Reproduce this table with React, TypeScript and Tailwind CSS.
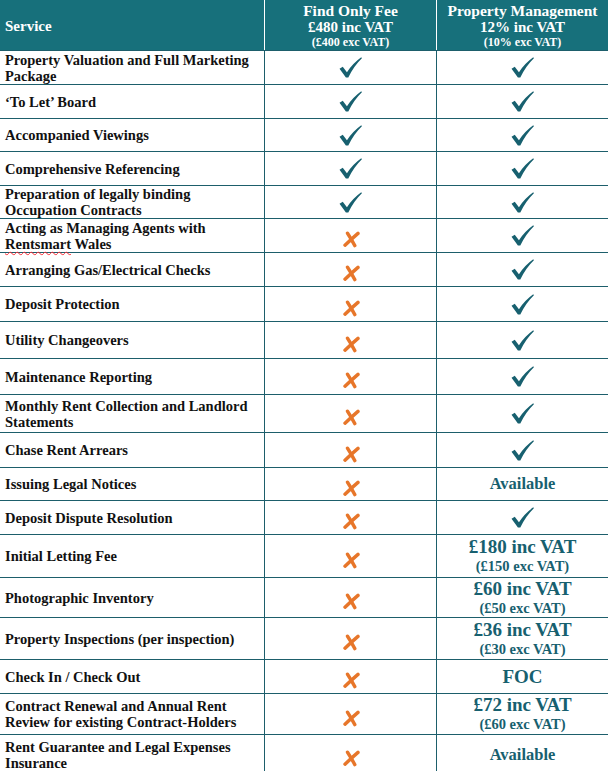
import React from 'react';

type Mark = 'tick' | 'cross' | { main: string; sub?: string; big?: boolean };

interface Row {
    service: React.ReactNode;
    h: string;
    find: Mark;
    manage: Mark;
}

const Tick: React.FC = () => (
    <svg width="23" height="21" viewBox="0 0 22 20" className="text-[#17606f]">
        <path
            d="M0.5 11.2 L3.6 9.4 L7.6 14.6 Q13 6.2 21.3 0.3 L21.9 1.2 Q14.2 8.6 8.9 19.6 L6.6 19.6 Z"
            fill="currentColor"
        />
    </svg>
);

// brushed italic cross
const Cross: React.FC = () => (
    <svg width="18" height="17" viewBox="0 0 18 17" className="text-[#e7762a]">
        <path d="M5.5 2.2 Q9 7.5 12.8 14.6" stroke="currentColor" strokeWidth="3.4" strokeLinecap="round" fill="none" />
        <path d="M16 2.4 Q10 7.6 3 14.2" stroke="currentColor" strokeWidth="3.4" strokeLinecap="round" fill="none" />
    </svg>
);

const Cell: React.FC<{ mark: Mark }> = ({ mark }) => {
    if (mark === 'tick') return <Tick />;
    if (mark === 'cross') return <div className="pt-[8px]"><Cross /></div>;
    return (
        <div className="flex flex-col items-center text-[#17606f] font-bold leading-none">
            <span className={mark.big ? 'text-[19px] leading-[20px]' : 'text-[16.5px] leading-[18px]'}>{mark.main}</span>
            {mark.sub && <span className="text-[14.5px] leading-[18px]">{mark.sub}</span>}
        </div>
    );
};

const rows: Row[] = [
    { service: <>Property Valuation and Full Marketing<br />Package</>, h: 'h-[34px]', find: 'tick', manage: 'tick' },
    { service: '‘To Let’ Board', h: 'h-[34px]', find: 'tick', manage: 'tick' },
    { service: 'Accompanied Viewings', h: 'h-[33px]', find: 'tick', manage: 'tick' },
    { service: 'Comprehensive Referencing', h: 'h-[34px]', find: 'tick', manage: 'tick' },
    { service: <>Preparation of legally binding<br />Occupation Contracts</>, h: 'h-[33px]', find: 'tick', manage: 'tick' },
    {
        service: <>Acting as Managing Agents with<br /><span className="underline decoration-wavy decoration-red-500 decoration-1 underline-offset-2">Rentsmart</span> Wales</>,
        h: 'h-[34px]', find: 'cross', manage: 'tick',
    },
    { service: 'Arranging Gas/Electrical Checks', h: 'h-[34px]', find: 'cross', manage: 'tick' },
    { service: 'Deposit Protection', h: 'h-[35px]', find: 'cross', manage: 'tick' },
    { service: 'Utility Changeovers', h: 'h-[37px]', find: 'cross', manage: 'tick' },
    { service: 'Maintenance Reporting', h: 'h-[36px]', find: 'cross', manage: 'tick' },
    { service: <>Monthly Rent Collection and Landlord<br />Statements</>, h: 'h-[38px]', find: 'cross', manage: 'tick' },
    { service: 'Chase Rent Arrears', h: 'h-[35px]', find: 'cross', manage: 'tick' },
    { service: 'Issuing Legal Notices', h: 'h-[33px]', find: 'cross', manage: { main: 'Available' } },
    { service: 'Deposit Dispute Resolution', h: 'h-[34px]', find: 'cross', manage: 'tick' },
    { service: 'Initial Letting Fee', h: 'h-[43px]', find: 'cross', manage: { main: '£180 inc VAT', sub: '(£150 exc VAT)', big: true } },
    { service: 'Photographic Inventory', h: 'h-[40px]', find: 'cross', manage: { main: '£60 inc VAT', sub: '(£50 exc VAT)', big: true } },
    { service: 'Property Inspections (per inspection)', h: 'h-[42px]', find: 'cross', manage: { main: '£36 inc VAT', sub: '(£30 exc VAT)', big: true } },
    { service: 'Check In / Check Out', h: 'h-[34px]', find: 'cross', manage: { main: 'FOC', big: true } },
    {
        service: <>Contract Renewal and Annual Rent<br />Review for existing Contract-Holders</>,
        h: 'h-[41px]', find: 'cross', manage: { main: '£72 inc VAT', sub: '(£60 exc VAT)', big: true },
    },
    { service: <>Rent Guarantee and Legal Expenses<br />Insurance</>, h: 'h-[40px]', find: 'cross', manage: { main: 'Available' } },
];

export default function App() {
    return (
        <div className="w-[608px] h-[771px] overflow-hidden bg-white font-['Liberation_Serif',serif] text-[#111]">
            {/* header */}
            <div className="flex h-[51px] bg-[#17707b] text-white font-bold border-b border-[#1d5e6b]">
                <div className="w-[264px] flex items-center pl-[5px] pt-[2px] text-[15px]">Service</div>
                <div className="w-[172px] border-l border-white flex flex-col items-center justify-center leading-none">
                    <span className="text-[15.5px] leading-[17px]">Find Only Fee</span>
                    <span className="text-[15px] leading-[17px]">£480 inc VAT</span>
                    <span className="text-[12px] leading-[13px]">(£400 exc VAT)</span>
                </div>
                <div className="w-[172px] border-l border-white flex flex-col items-center justify-center leading-none">
                    <span className="text-[15.5px] leading-[17px]">Property Management</span>
                    <span className="text-[15px] leading-[17px]">12% inc VAT</span>
                    <span className="text-[12px] leading-[13px]">(10% exc VAT)</span>
                </div>
            </div>
            {rows.map((row, i) => (
                <div key={i} className={`flex ${row.h} border-b border-[#1d5e6b]`}>
                    <div className="w-[264px] flex items-center pl-[5px] text-[14.5px] font-bold leading-[16px]">
                        <div>{row.service}</div>
                    </div>
                    <div className="w-[172px] border-l border-[#1d5e6b] flex items-center justify-center">
                        <Cell mark={row.find} />
                    </div>
                    <div className="w-[172px] border-l border-[#1d5e6b] flex items-center justify-center">
                        <Cell mark={row.manage} />
                    </div>
                </div>
            ))}
        </div>
    );
}
